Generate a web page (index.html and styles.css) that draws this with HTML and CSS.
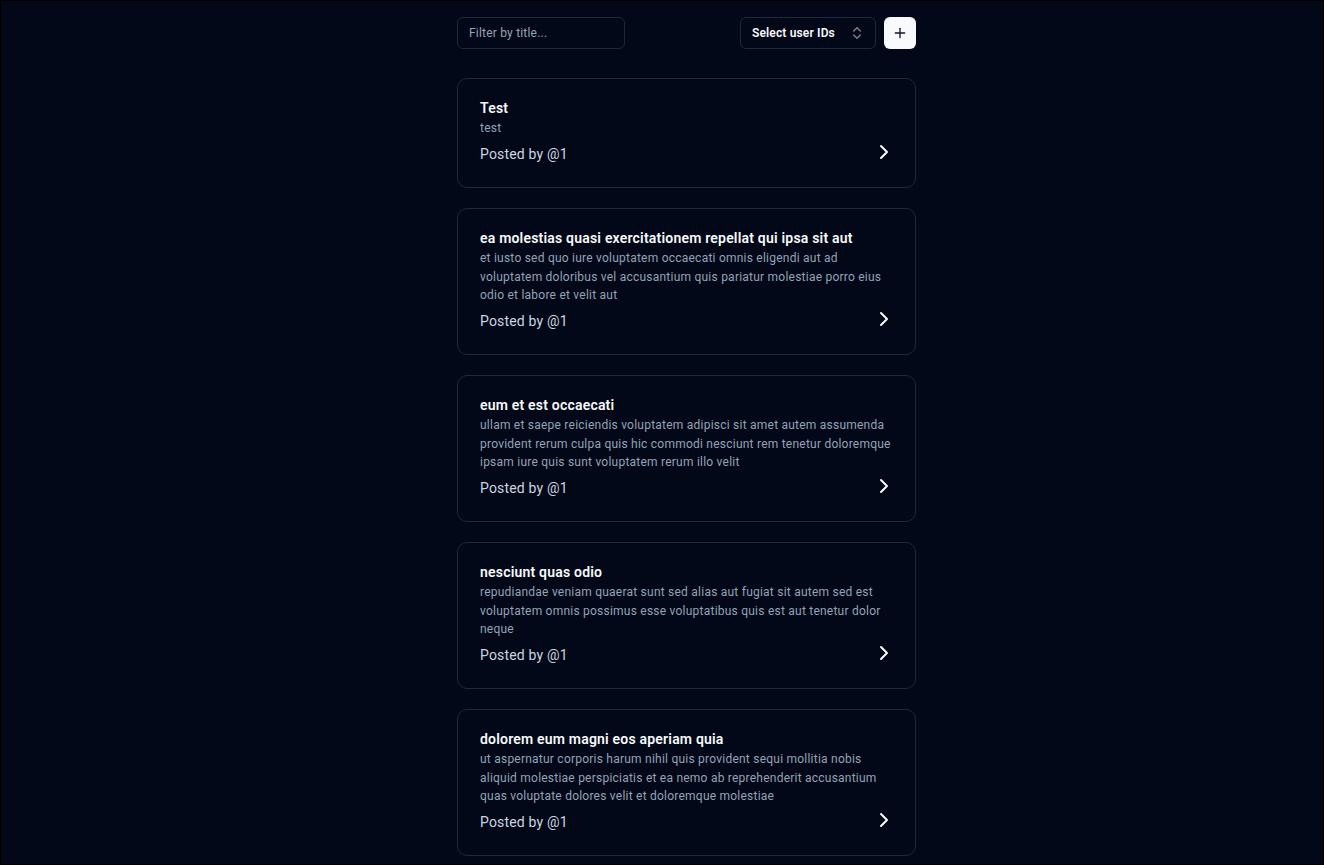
FILE: index.html
```html
<!DOCTYPE html>
<html>
  <head>
    <meta name="viewport" content="width=device-width, initial-scale=1">
    <link rel="stylesheet" href="styles.css">
  </head>
  <body>
    <div class="page">
      <main class="feed">

        <div class="toolbar">
          <input class="filter" type="text" placeholder="Filter by title...">
          <div class="toolbar-right">
            <button class="select" type="button">
              <span>Select user IDs</span>
              <svg width="16" height="16" viewBox="0 0 24 24" fill="none" stroke="currentColor" stroke-width="2" stroke-linecap="round" stroke-linejoin="round"><path d="m7 15 5 5 5-5"/><path d="m7 9 5-5 5 5"/></svg>
            </button>
            <button class="add" type="button">
              <svg width="16" height="16" viewBox="0 0 24 24" fill="none" stroke="currentColor" stroke-width="2" stroke-linecap="round" stroke-linejoin="round"><path d="M5 12h14"/><path d="M12 5v14"/></svg>
            </button>
          </div>
        </div>

        <ul class="posts">
          <li class="post">
            <h2 class="post-title">Test</h2>
            <p class="post-body">test</p>
            <div class="post-footer">
              <span>Posted by @1</span>
              <svg class="chev" width="24" height="24" viewBox="0 0 24 24" fill="none" stroke="currentColor" stroke-width="2" stroke-linecap="round" stroke-linejoin="round"><path d="m9 18 6-6-6-6"/></svg>
            </div>
          </li>
          <li class="post">
            <h2 class="post-title">ea molestias quasi exercitationem repellat qui ipsa sit aut</h2>
            <p class="post-body">et iusto sed quo iure voluptatem occaecati omnis eligendi aut ad voluptatem doloribus vel accusantium quis pariatur molestiae porro eius odio et labore et velit aut</p>
            <div class="post-footer">
              <span>Posted by @1</span>
              <svg class="chev" width="24" height="24" viewBox="0 0 24 24" fill="none" stroke="currentColor" stroke-width="2" stroke-linecap="round" stroke-linejoin="round"><path d="m9 18 6-6-6-6"/></svg>
            </div>
          </li>
          <li class="post">
            <h2 class="post-title">eum et est occaecati</h2>
            <p class="post-body">ullam et saepe reiciendis voluptatem adipisci sit amet autem assumenda provident rerum culpa quis hic commodi nesciunt rem tenetur doloremque ipsam iure quis sunt voluptatem rerum illo velit</p>
            <div class="post-footer">
              <span>Posted by @1</span>
              <svg class="chev" width="24" height="24" viewBox="0 0 24 24" fill="none" stroke="currentColor" stroke-width="2" stroke-linecap="round" stroke-linejoin="round"><path d="m9 18 6-6-6-6"/></svg>
            </div>
          </li>
          <li class="post">
            <h2 class="post-title">nesciunt quas odio</h2>
            <p class="post-body">repudiandae veniam quaerat sunt sed alias aut fugiat sit autem sed est voluptatem omnis possimus esse voluptatibus quis est aut tenetur dolor neque</p>
            <div class="post-footer">
              <span>Posted by @1</span>
              <svg class="chev" width="24" height="24" viewBox="0 0 24 24" fill="none" stroke="currentColor" stroke-width="2" stroke-linecap="round" stroke-linejoin="round"><path d="m9 18 6-6-6-6"/></svg>
            </div>
          </li>
          <li class="post">
            <h2 class="post-title">dolorem eum magni eos aperiam quia</h2>
            <p class="post-body">ut aspernatur corporis harum nihil quis provident sequi mollitia nobis aliquid molestiae perspiciatis et ea nemo ab reprehenderit accusantium quas voluptate dolores velit et doloremque molestiae</p>
            <div class="post-footer">
              <span>Posted by @1</span>
              <svg class="chev" width="24" height="24" viewBox="0 0 24 24" fill="none" stroke="currentColor" stroke-width="2" stroke-linecap="round" stroke-linejoin="round"><path d="m9 18 6-6-6-6"/></svg>
            </div>
          </li>
        </ul>

      </main>
    </div>
  </body>
</html>
```

FILE: styles.css
```css
/* page frame */
* {
  box-sizing: border-box;
}

body {
  margin: 0;
  background-color: #000;
  font-family: Roboto, "Liberation Sans", sans-serif;
  color: #f8fafc;
}

.page {
  height: 865px;
  overflow: hidden;
  border: 1px solid #000;
  background-color: #020817;
  padding: 16px 0 0 456px;
}

.feed {
  width: 459px;
}

/* filter row */
.toolbar {
  display: flex;
  justify-content: space-between;
  align-items: center;
  height: 32px;
}

.toolbar-right {
  display: flex;
  gap: 8px;
}

.filter {
  width: 168px;
  height: 32px;
  padding: 0 11px;
  border: 1px solid #1e293b;
  border-radius: 6px;
  background: transparent;
  color: #f8fafc;
  font-family: inherit;
  font-size: 12px;
  letter-spacing: 0.2px;
  outline: none;
}

.filter::placeholder {
  color: #94a3b8;
}

.select {
  display: flex;
  justify-content: space-between;
  align-items: center;
  width: 136px;
  height: 32px;
  padding: 0 10px 0 11px;
  border: 1px solid #1e293b;
  border-radius: 6px;
  background: transparent;
  color: #f8fafc;
  font-family: inherit;
  font-size: 12px;
  font-weight: 600;
  letter-spacing: 0.15px;
}

.select svg {
  opacity: 0.5;
}

.add {
  display: flex;
  justify-content: center;
  align-items: center;
  width: 32px;
  height: 32px;
  padding: 0;
  border: none;
  border-radius: 6px;
  background-color: #f8fafc;
  color: #0f172a;
}

/* post cards */
.posts {
  list-style: none;
  margin: 29px 0 0;
  padding: 0;
  display: flex;
  flex-direction: column;
  gap: 20px;
}

.post {
  border: 1px solid #1e293b;
  border-radius: 10px;
  padding: 19px 22px 23.5px;
}

.post-title {
  margin: 0;
  font-size: 14px;
  line-height: 20px;
  font-weight: 600;
  letter-spacing: 0.2px;
  color: #f8fafc;
}

.post-body {
  margin: 1px 0 0;
  font-size: 12px;
  line-height: 18.5px;
  letter-spacing: 0.23px;
  color: #94a3b8;
}

.post-footer {
  display: flex;
  justify-content: space-between;
  align-items: center;
  height: 20px;
  margin-top: 6px;
  font-size: 14px;
  letter-spacing: 0.17px;
  color: #cbd5e1;
}

.chev {
  color: #f8fafc;
  margin: 0 -3px 4px 0;
}
```
